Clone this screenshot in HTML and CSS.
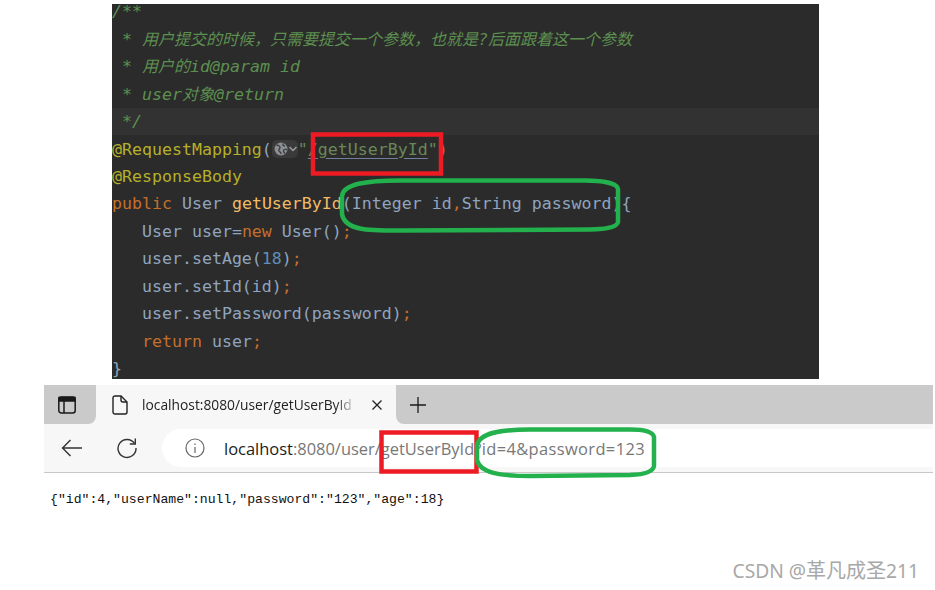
FILE: index.html
```
<!DOCTYPE html>
<html lang="zh">
<head>
<meta charset="utf-8">
<title>getUserById</title>
<link rel="stylesheet" href="styles.css">
</head>
<body>
<div class="page">
  <section class="editor">
    <div class="code">
      <div class="line cm">/**</div>
      <div class="line cm"> * <span class="cjk">用户提交的时候，只需要提交一个参数，也就是</span>?<span class="cjk">后面跟着这一个参数</span></div>
      <div class="line cm"> * <span class="cjk">用户的</span>id@param id</div>
      <div class="line cm"> * user<span class="cjk">对象</span>@return</div>
      <div class="line cm current"> */</div>
      <div class="line"><span class="ann">@RequestMapping</span>(<span class="globe"><svg width="26" height="18" viewBox="0 0 26 18"><rect x="0" y="0" width="26" height="18" rx="5" fill="#3a3a3a"/><circle cx="9" cy="9" r="6.500" fill="#8b8f93"/><path d="M4.500 5c1.500 0 3.500 1 3.500 2.500S6 9.500 7 11s2 1 2 3M11 3.500c-.5 1.500.5 2.500 2 2.500M15 9.500c-2-.5-3.500 0-3.500 1.500s1 1.500 1.500 2.500" fill="none" stroke="#3a3a3a" stroke-width="1.300"/><path d="M17.500 7l3.500 3.500L24.500 7" fill="none" stroke="#9a9ea2" stroke-width="1.500"/></svg></span><span class="str">"<span class="link">/getUserById</span>"</span><span class="kw">)</span></div>
      <div class="line ann">@ResponseBody</div>
      <div class="line"><span class="kw">public</span> User <span class="fn">getUserById</span>(Integer id<span class="kw">,</span>String password){</div>
      <div class="line">   User user=<span class="kw">new</span> User()<span class="kw">;</span></div>
      <div class="line">   user.setAge(<span class="num">18</span>)<span class="kw">;</span></div>
      <div class="line">   user.setId(id)<span class="kw">;</span></div>
      <div class="line">   user.setPassword(password)<span class="kw">;</span></div>
      <div class="line">   <span class="kw">return</span> user<span class="kw">;</span></div>
      <div class="line">}</div>
    </div>
  </section>

  <section class="browser">
    <div class="tabstrip">
      <div class="tabbtn">
        <svg width="20" height="20" viewBox="0 0 20 20" fill="none" stroke="#1a1a1a" stroke-width="1.500"><rect x="1.800" y="2" width="16.400" height="16" rx="2.500"/><path d="M2 2.500h16V6H2z" fill="#1a1a1a"/><path d="M7 6v12"/></svg>
      </div>
      <div class="tab">
        <svg class="pageicon" width="16" height="20" viewBox="0 0 16 20" fill="none" stroke="#222" stroke-width="1.400"><path d="M1 3a2 2 0 0 1 2-2h6l6 6v10a2 2 0 0 1-2 2H3a2 2 0 0 1-2-2z"/><path d="M9 1v4a2 2 0 0 0 2 2h4"/></svg>
        <span class="tabtitle">localhost:8080/user/getUserById</span>
        <svg class="close" width="12" height="12" viewBox="0 0 12 12" stroke="#222" stroke-width="1.300"><path d="M1.500 1.500l9 9M10.500 1.500l-9 9"/></svg>
      </div>
      <div class="newtab">
        <svg width="18" height="18" viewBox="0 0 18 18" stroke="#1a1a1a" stroke-width="1.300"><path d="M9 1v16M1 9h16"/></svg>
      </div>
    </div>
    <div class="toolbar">
      <svg class="navicon" width="22" height="18" viewBox="0 0 22 18" fill="none" stroke="#333" stroke-width="1.400"><path d="M21 9H1.500M9.500 1L1.500 9l8 8"/></svg>
      <svg class="navicon reload" width="22" height="22" viewBox="0 0 22 22" fill="none" stroke="#333" stroke-width="1.400"><path d="M18.500 6.500A9 9 0 1 0 20 11"/><path d="M19.300 1.500v5.500h-5.500"/></svg>
      <div class="omnibox">
        <svg class="info" width="20" height="20" viewBox="0 0 20 20" fill="none" stroke="#666" stroke-width="1.200"><circle cx="10" cy="10" r="9"/><path d="M10 9v6M10 5.500v1.500"/></svg>
        <div class="url"><span class="host">localhost</span>:8080/user/getUserById<span class="query">?id=4&amp;password=123</span></div>
      </div>
    </div>
    <div class="content">{"id":4,"userName":null,"password":"123","age":18}</div>
  </section>

  <svg class="marks" width="935" height="590" viewBox="0 0 935 590" fill="none">
    <rect class="red" x="313" y="134.500" width="128" height="39"/>
    <rect class="red" x="381.500" y="432.500" width="95" height="39"/>
    <path class="green" d="M400 180.500H585C602 180.500 617 183 618 189V222C617 228 602 229.500 590 229.500L400 230.500C370 230.500 345 231 342 214V196C343 183 370 180.500 400 180.500Z"/>
    <path class="green" d="M530 429.500H630C645 429.500 653 432 654 437V466C653 472 645 474.500 630 475L530 476C500 476 480 473 477 460V445C480 433 500 429.500 530 429.500Z"/>
  </svg>

  <div class="watermark">CSDN @<span class="wm-cjk">革凡成圣</span>211</div>
</div>
</body>
</html>
```
FILE: styles.css
```
* { box-sizing: border-box; }
html, body { margin: 0; padding: 0; background: #fff; }
.page { position: relative; width: 935px; height: 590px; overflow: hidden; padding-top: 4px; }

.editor { width: 707px; height: 375px; margin-left: 112px; background: #2b2b2b; overflow: hidden; }
.code { margin-top: -5.200px; font: 16.600px/27.450px "DejaVu Sans Mono", monospace; color: #8fa5bf; }
.line { height: 27.450px; white-space: pre; }
.current { background: #323232; margin-top: -0.500px; }
.cm { color: #5d8f50; font-style: italic; position: relative; top: -0.500px; }
.cjk { font-family: "Noto Sans CJK SC", sans-serif; font-size: 16px; line-height: 1; }
.ann { color: #b5b02a; }
.kw { color: #c4702c; }
.fn { color: #f0bc68; }
.num { color: #5f8fb8; }
.str { color: #6a8759; }
.link { text-decoration: underline; text-decoration-color: #6f7f9c; text-underline-offset: 3px; }
.globe { display: inline-block; width: 26px; height: 18px; vertical-align: -3px; line-height: 1; }
.globe svg { display: block; }

.browser { margin: 6px 2px 0 44px; }
.tabstrip { display: flex; height: 39px; background: #f7f7f7; }
.tabbtn { width: 52px; background: #cacaca; border-bottom-right-radius: 8px; display: flex; align-items: center; justify-content: center; padding-right: 6px; }
.tab { width: 300px; background: #f7f7f7; border-radius: 8px 8px 0 0; display: flex; align-items: center; padding-left: 16px; }
.pageicon { flex: none; }
.tabtitle { width: 215px; margin-left: 14px; font: 13.800px "Open Sans", sans-serif; color: #222; white-space: nowrap; -webkit-mask-image: linear-gradient(to right, #000 90%, transparent 100%); mask-image: linear-gradient(to right, #000 90%, transparent 100%); }
.close { margin-left: 14px; flex: none; }
.newtab { flex: 1; background: #cacaca; border-bottom-left-radius: 8px; display: flex; align-items: center; padding-left: 13px; }

.toolbar { display: flex; align-items: center; height: 49px; background: #f7f7f7; border-bottom: 1px solid #c8c8c8; padding-left: 17px; }
.navicon { flex: none; margin-right: 33px; }
.reload { margin-right: 24px; }
.omnibox { flex: 1; height: 38px; background: #fff; border-radius: 19px 0 0 19px; display: flex; align-items: center; padding-left: 23px; }
.info { flex: none; }
.url { margin-left: 19px; font: 16.470px "Open Sans", sans-serif; color: #777; white-space: nowrap; }
.host { color: #1c1c1c; }
.query { letter-spacing: .37px; }

.content { padding: 17px 0 0 6px; font: 13.150px/20px "Liberation Mono", monospace; color: #111; white-space: pre; }

.marks { position: absolute; left: 0; top: 0; pointer-events: none; }
.red { stroke: #ed1c24; stroke-width: 4.500; }
.green { stroke: #22b14c; stroke-width: 4.500; }

.watermark { position: absolute; right: 16px; top: 558px; font: 19.200px/26px "Noto Sans", "Noto Sans CJK SC", sans-serif; color: #a8a8a8; white-space: nowrap; }
.wm-cjk { font-family: "Noto Sans CJK SC", sans-serif; font-size: 20px; line-height: 1; }
```
